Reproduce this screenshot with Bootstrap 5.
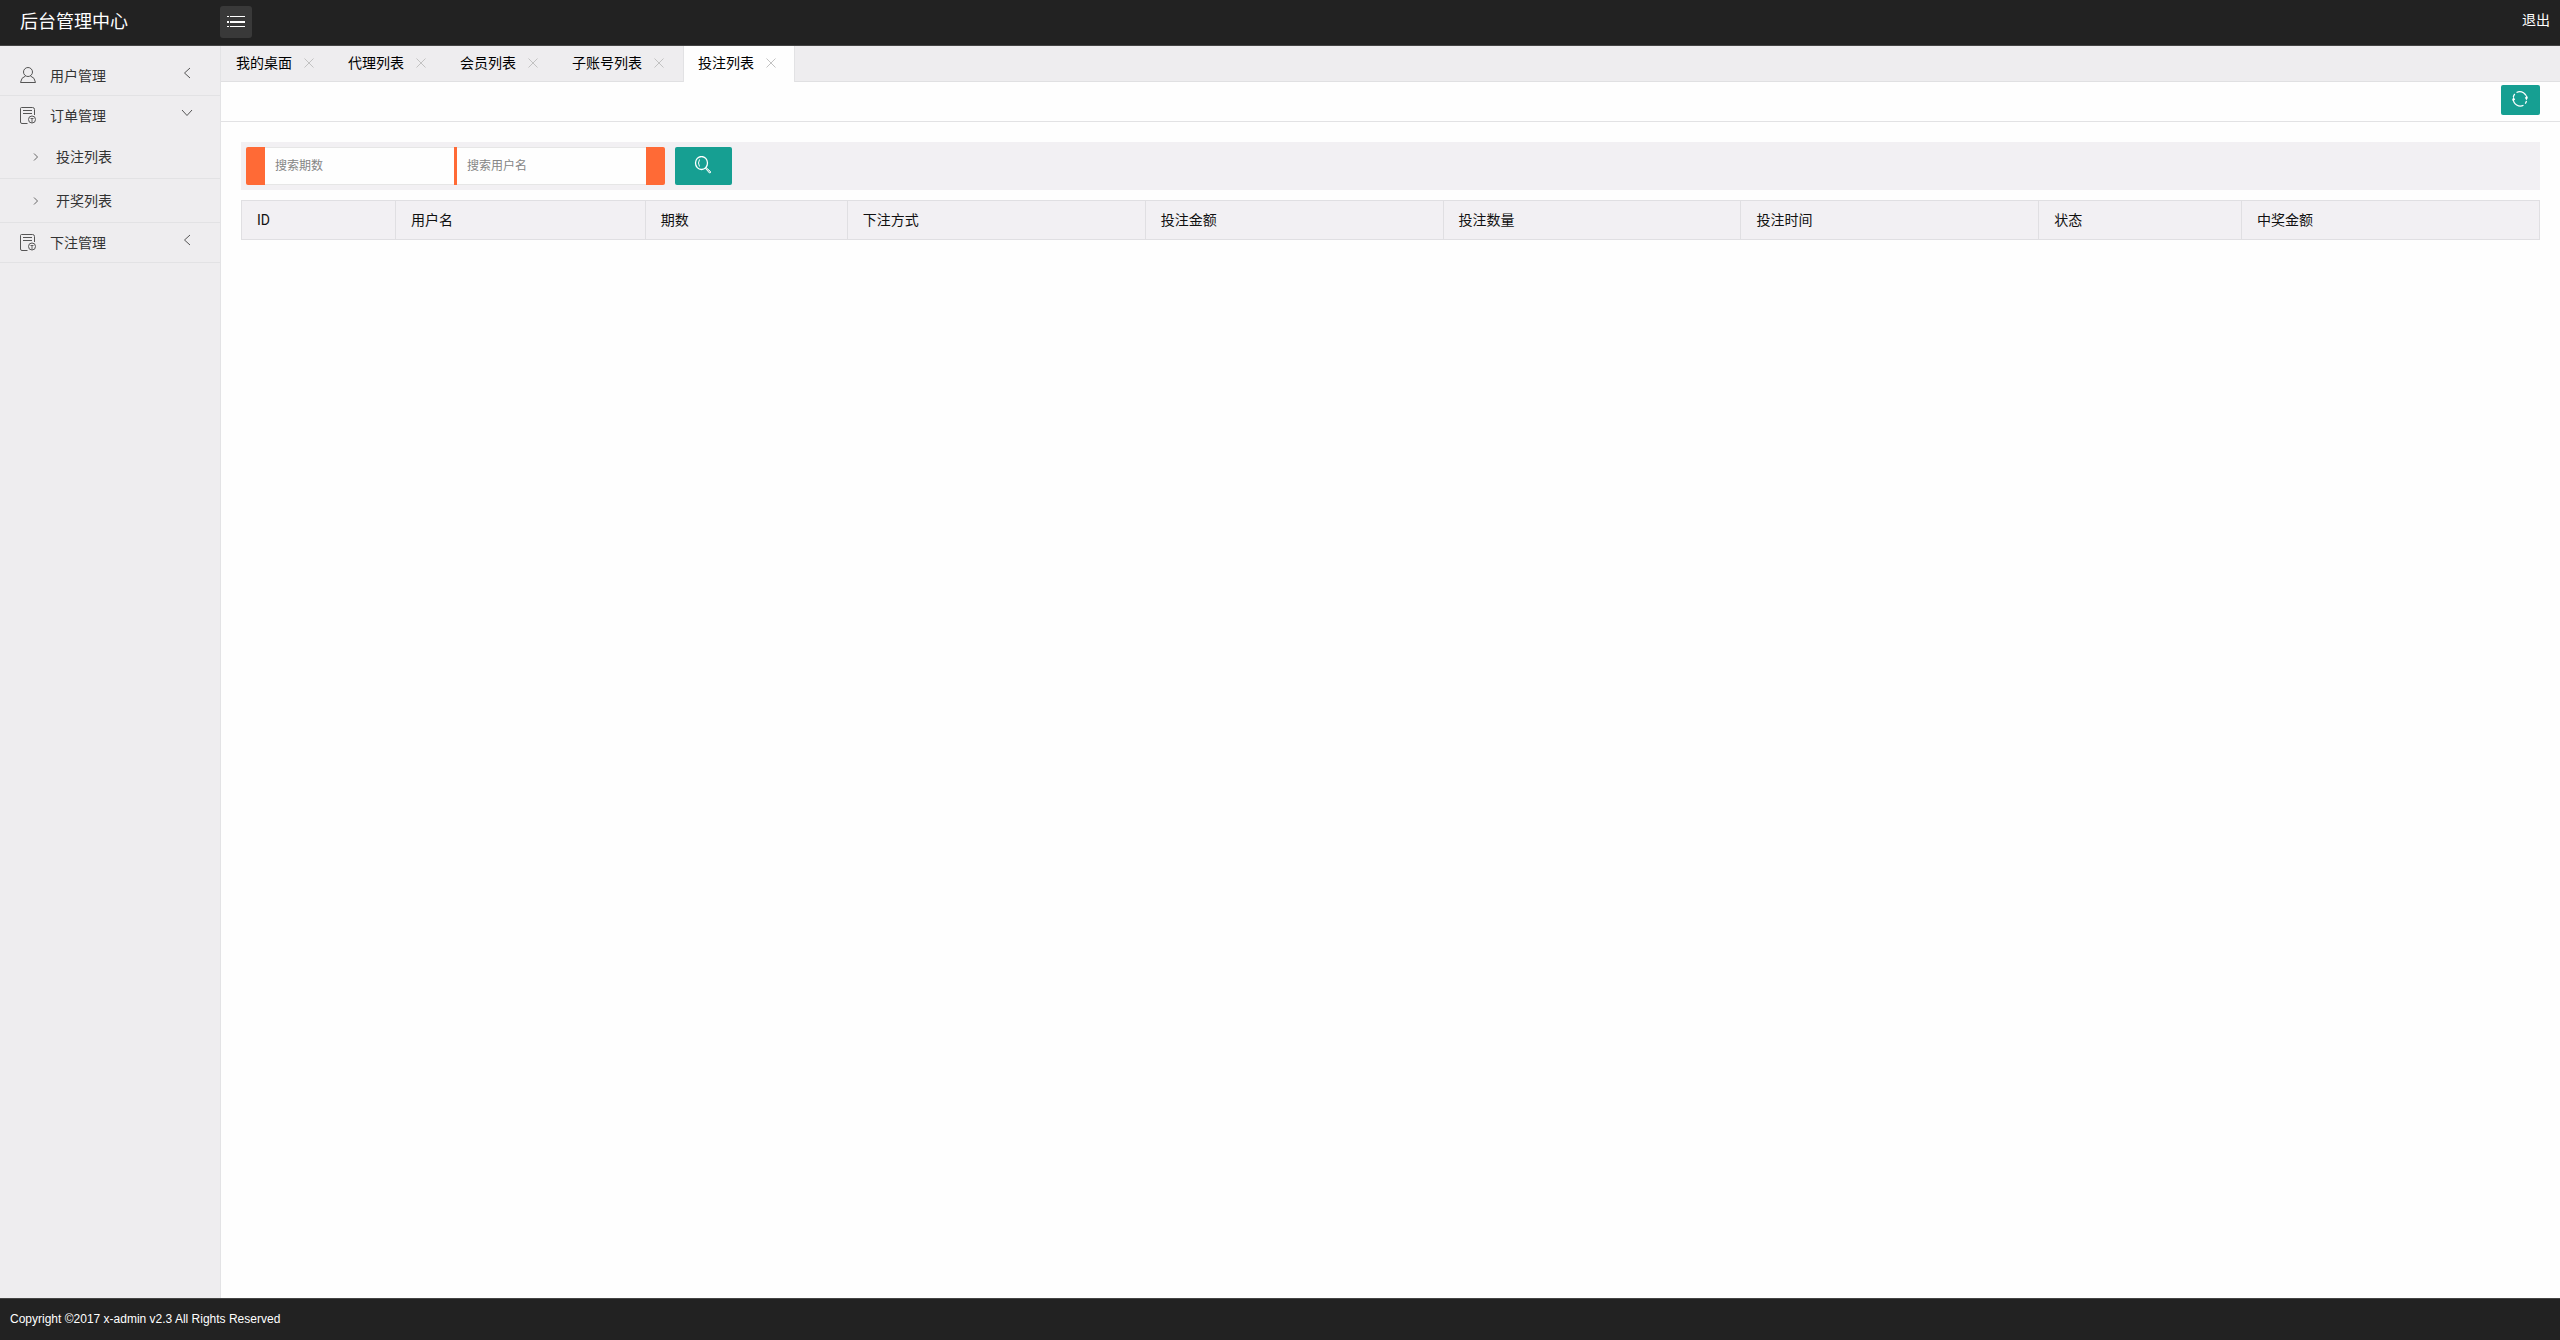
<!DOCTYPE html>
<html lang="zh-CN">
<head>
<meta charset="utf-8">
<meta name="viewport" content="width=device-width, initial-scale=1">
<title>后台管理中心</title>
<link href="https://cdn.jsdelivr.net/npm/bootstrap@5.3.0/dist/css/bootstrap.min.css" rel="stylesheet">
<style>
body { font: 400 14px/24px Roboto, "Noto Sans CJK SC", sans-serif; color: #333; background: #fefefe; }
a { color: inherit; text-decoration: none; }
svg { display: block; fill: none; stroke: currentColor; }
.topbar { height: 46px; padding-bottom: 1px; background: #222; border-bottom: 1px solid #444; color: #fff; }
.brand-name { width: 220px; padding-left: 20px; font-size: 18px; }
.menu-toggle { width: 32px; height: 32px; background: #393939; color: #fff; border-radius: 3px; }
.logout { padding: 0 10px 4px; }
.sidebar { width: 221px; padding-top: 10px; background: #eeedef; border-right: 1px solid #e3e3e5; }
.sidebar-group { border-bottom: 1px solid #e2e2e4; }
.sidebar-link { height: 39px; padding: 1px 27px 0 20px; }
.sidebar-link svg { color: #555; }
.sidebar-link .title-text { margin-left: 14px; }
.sidebar-link .arrow { margin: 0 0 6px auto; }
.sub-link { height: 43px; padding-left: 33px; gap: 17px; }
.sub-link + .sub-link { height: 44px; border-top: 1px solid #e2e2e4; }
.sub-link svg { color: #666; }
.tabbar { height: 36px; background: #eeedef; border-bottom: 1px solid #e0e0e2; color: #000; }
.tab-item { height: 36px; padding: 0 15px 2px; gap: 8px; }
.tab-item.active { background: #fefefe; box-shadow: inset 1px 0 #e2e2e4, inset -1px 0 #e2e2e4; }
.tab-close { width: 18px; height: 18px; color: #c2c2c2; }
.crumbs { height: 40px; padding: 0 20px; border-bottom: 1px solid #e2e2e4; }
.teal-btn { background: #169f92; color: #fff; border-radius: 2px; }
.teal-btn:hover { background: #2bb0a3; }
.refresh-btn { width: 39px; height: 30px; padding: 0 2px 2px 0; }
.search-btn { width: 57px; height: 38px; padding: 0 2px 2px 0; }
.content-area { padding: 20px; }
.search-strip { background: #f2f0f3; padding: 5px; gap: 10px; }
.fields { background: #ff6a36; padding: 0 19px; gap: 3px; border-radius: 2px; }
.fields input { width: 189px; height: 38px; padding: 0 10px; font-size: 12px; border: 1px solid #e6e6e6; border-width: 1px 0; border-radius: 0; background: #fefefe; outline: 0; }
.fields input::placeholder { color: #858585; opacity: 1; }
.bets { table-layout: fixed; margin-top: 10px; color: #111; }
.bets th { height: 39px; padding: 0 15px 1px; font-weight: 400; background: #f2f0f3; border: 1px solid #e0dfe2; }
.site-footer { height: 42px; padding: 0 10px 2px; background: #222; border-top: 1px solid #444; color: #fff; font: 12px/20px "Liberation Sans", sans-serif; }
</style>
<script src="https://cdn.jsdelivr.net/npm/bootstrap@5.3.0/dist/js/bootstrap.bundle.min.js" defer></script>
</head>
<body class="d-flex flex-column min-vh-100">
<svg width="0" height="0" class="position-absolute" aria-hidden="true">
  <symbol id="order" viewBox="0 0 16 18"><path d="M7.500 16.500H2Q.5 16.500 .5 15V1.500Q.5 .5 1.500 .5H12.500Q14.500 .5 14.500 2.500V8M3 3.500H12M3 6.500H12"/><circle cx="12" cy="12.500" r="3.500"/><path d="M10.500 11.500h3M12 11.500v4" stroke-width=".9"/></symbol>
  <symbol id="close" viewBox="0 0 18 18"><path d="M4.500 4.500l9 9M13.500 4.500l-9 9"/></symbol>
  <symbol id="left" viewBox="0 0 12 12"><path d="M9 1L3.500 6 9 11"/></symbol>
  <symbol id="right" viewBox="0 0 6 10"><path d="M1 1.500L4.500 5 1 8.500"/></symbol>
</svg>

<header class="topbar d-flex align-items-center">
  <a href="#" class="brand-name">后台管理中心</a>
  <button class="menu-toggle btn p-0 border-0 d-flex align-items-center justify-content-center" type="button" aria-label="菜单">
    <svg width="18" height="12" viewBox="0 0 18 12"><path d="M0 .5h2M3 .5h15M0 10.500h2M3 10.500h15"/><path d="M0 6h2M3 6h15" stroke-width="2"/></svg>
  </button>
  <a href="#" class="logout ms-auto">退出</a>
</header>

<div class="d-flex flex-grow-1">
  <nav class="sidebar flex-shrink-0">
    <div class="sidebar-group">
      <a href="#" class="sidebar-link d-flex align-items-center">
        <svg width="16" height="18" viewBox="0 0 16 18"><circle cx="8" cy="5" r="4.500"/><path d="M5.500 9Q1 10.500 .5 15.500h15Q15 10.500 10.500 9"/></svg>
        <span class="title-text">用户管理</span>
        <svg class="arrow" width="12" height="12"><use href="#left"/></svg>
      </a>
    </div>
    <div class="sidebar-group">
      <a href="#" class="sidebar-link d-flex align-items-center">
        <svg width="16" height="18"><use href="#order"/></svg>
        <span class="title-text">订单管理</span>
        <svg class="arrow" width="12" height="12" viewBox="0 0 12 12"><path d="M1 3l5 5.500L11 3"/></svg>
      </a>
      <a href="#" class="sub-link d-flex align-items-center"><svg width="6" height="10"><use href="#right"/></svg>投注列表</a>
      <a href="#" class="sub-link d-flex align-items-center"><svg width="6" height="10"><use href="#right"/></svg>开奖列表</a>
    </div>
    <div class="sidebar-group">
      <a href="#" class="sidebar-link d-flex align-items-center">
        <svg width="16" height="18"><use href="#order"/></svg>
        <span class="title-text">下注管理</span>
        <svg class="arrow" width="12" height="12"><use href="#left"/></svg>
      </a>
    </div>
  </nav>

  <main class="flex-grow-1">
    <div class="tabbar d-flex">
      <div class="tab-item d-flex align-items-center"><a href="#">我的桌面</a><button class="tab-close btn p-0 border-0" type="button" aria-label="关闭"><svg width="18" height="18"><use href="#close"/></svg></button></div>
      <div class="tab-item d-flex align-items-center"><a href="#">代理列表</a><button class="tab-close btn p-0 border-0" type="button" aria-label="关闭"><svg width="18" height="18"><use href="#close"/></svg></button></div>
      <div class="tab-item d-flex align-items-center"><a href="#">会员列表</a><button class="tab-close btn p-0 border-0" type="button" aria-label="关闭"><svg width="18" height="18"><use href="#close"/></svg></button></div>
      <div class="tab-item d-flex align-items-center"><a href="#">子账号列表</a><button class="tab-close btn p-0 border-0" type="button" aria-label="关闭"><svg width="18" height="18"><use href="#close"/></svg></button></div>
      <div class="tab-item active d-flex align-items-center"><a href="#">投注列表</a><button class="tab-close btn p-0 border-0" type="button" aria-label="关闭"><svg width="18" height="18"><use href="#close"/></svg></button></div>
    </div>
    <div class="crumbs d-flex align-items-center justify-content-end">
      <button class="teal-btn refresh-btn btn border-0 mb-1 d-flex align-items-center justify-content-center" type="button" aria-label="刷新">
        <svg width="16" height="16" viewBox="0 0 16 16"><path d="M4.500 1.500A7 7 0 0 1 14.700 8M11.500 14.200A7 7 0 0 1 1.300 8M2.800 3A7 7 0 0 0 1.300 6M13.200 12.700A7 7 0 0 0 14.500 10" stroke-width="1.200"/><path d="M12.800 6.500l1.700 3 1.500-4zM3.200 9L1.500 5.500 0 9.500z" fill="currentColor" stroke="none"/></svg>
      </button>
    </div>
    <div class="content-area">
      <form class="search-strip d-flex">
        <div class="fields d-flex">
          <input type="text" placeholder="搜索期数" aria-label="搜索期数">
          <input type="text" placeholder="搜索用户名" aria-label="搜索用户名">
        </div>
        <button class="teal-btn search-btn btn border-0 d-flex align-items-center justify-content-center" type="button" aria-label="搜索">
          <svg width="18" height="18" viewBox="0 0 18 18"><ellipse cx="7.500" cy="7" rx="6" ry="6.500" stroke-width="1.300"/><path d="M5.500 3.500Q3.500 7 5.500 10.500"/><path d="M12 11.500l4.500 4q.5 1.500-1 1.500l-4-4.500z" fill="currentColor" fill-opacity=".4"/></svg>
        </button>
      </form>
      <table class="bets w-100">
        <colgroup><col style="width:6.7%"><col style="width:10.87%"><col style="width:8.79%"><col style="width:12.97%"><col style="width:12.96%"><col style="width:12.96%"><col style="width:12.96%"><col style="width:8.83%"><col style="width:12.96%"></colgroup>
        <thead><tr><th>ID</th><th>用户名</th><th>期数</th><th>下注方式</th><th>投注金额</th><th>投注数量</th><th>投注时间</th><th>状态</th><th>中奖金额</th></tr></thead>
      </table>
    </div>
  </main>
</div>

<footer class="site-footer d-flex align-items-center">Copyright ©2017 x-admin v2.3 All Rights Reserved</footer>
</body>
</html>
